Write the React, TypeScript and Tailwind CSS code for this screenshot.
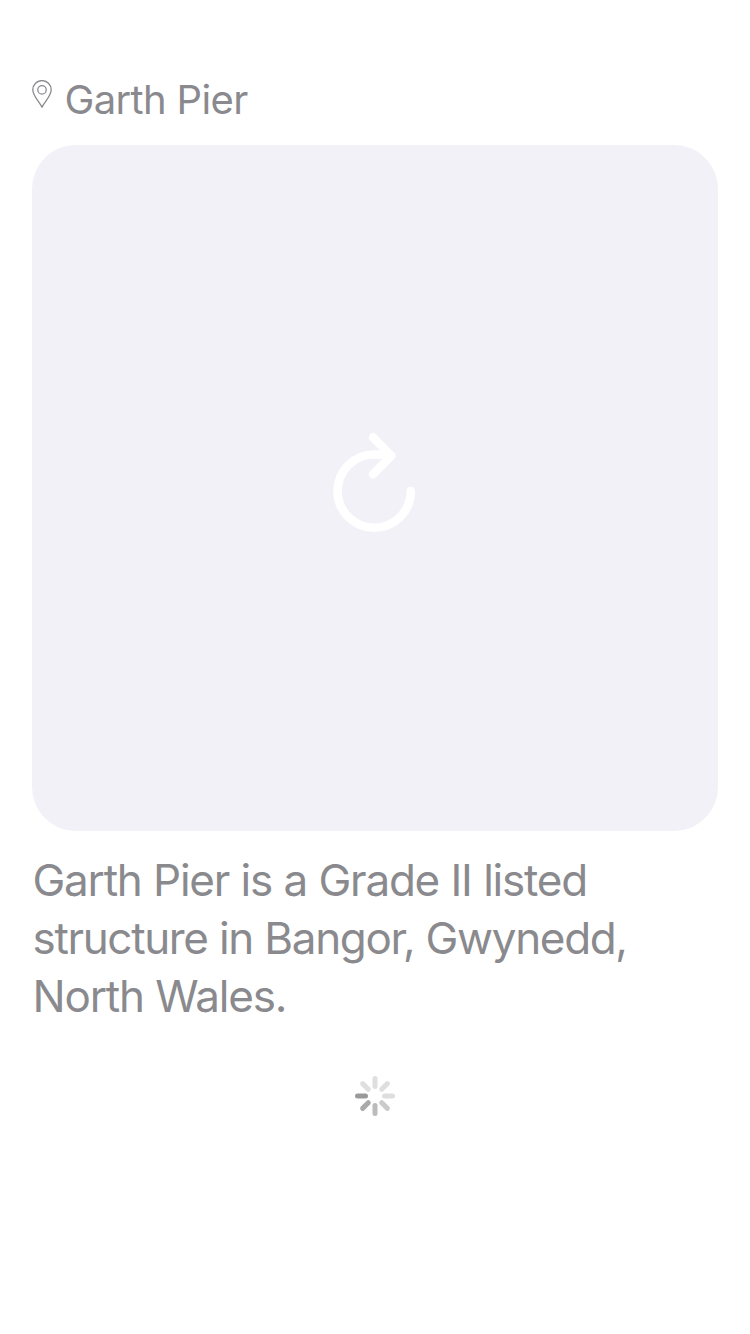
const FONT = "font-['Inter','Liberation_Sans',sans-serif]";

const SPOKES = [
  { angle: 0, color: "#dfdfdf" },
  { angle: 45, color: "#dfdfdf" },
  { angle: 90, color: "#dedede" },
  { angle: 135, color: "#cbcbcc" },
  { angle: 180, color: "#bbbbbc" },
  { angle: 225, color: "#aaaaab" },
  { angle: 270, color: "#9a9a9b" },
  { angle: 315, color: "#dfdfdf" },
];

function PinIcon() {
  return (
    <svg className="-mt-3 h-7 w-5" viewBox="0 0 20 28" fill="none" stroke="currentColor" strokeWidth="1.3" strokeLinejoin="round">
      <path d="M10 27.1C7.8 22.5.8 16 .8 9.8a9.2 9.2 0 0 1 18.4 0C19.2 16 12.2 22.5 10 27.1Z" />
      <circle cx="10" cy="9.9" r="4.2" />
    </svg>
  );
}

function ReloadIcon() {
  return (
    <svg className="mb-3 h-[100px] w-[84px]" viewBox="0 0 84 100" fill="none" stroke="white" strokeWidth="8.6" strokeLinecap="round" strokeLinejoin="round">
      <path d="M77.8 59A36.6 36.6 0 1 1 41.2 22.5Q50 22.5 57.6 23.8M40 5.3L58.3 23.8L40 42.3" />
    </svg>
  );
}

function Spinner() {
  return (
    <svg className="mt-[51px] size-10 self-center" viewBox="-20 -20 40 40" strokeWidth="5" strokeLinecap="round">
      {SPOKES.map(({ angle, color }) => (
        <path key={angle} d="M0-9.5V-17.5" stroke={color} transform={`rotate(${angle})`} />
      ))}
    </svg>
  );
}

export default function App() {
  return (
    <main className={`${FONT} flex h-[1334px] w-[750px] flex-col bg-white px-8 pt-[74px] text-[#8a8a8e]`}>
      <header className="flex h-[52px] items-center">
        <PinIcon />
        <h1 className="ml-[12.5px] text-[40px] leading-[52px] tracking-[-0.65px] whitespace-nowrap">Garth Pier</h1>
      </header>
      <section className="mt-[19px] flex h-[686px] items-center justify-center rounded-[44px] bg-[#f2f1f7]">
        <ReloadIcon />
      </section>
      <p className="mt-[20px] pl-[0.5px] text-[44px] leading-[58px] whitespace-nowrap">
        <span className="block tracking-[-1.22px] [word-spacing:0.3px]">Garth Pier is a Grade II listed</span>
        <span className="block tracking-[-1.34px] [word-spacing:0.3px]">structure in Bangor, Gwynedd,</span>
        <span className="block tracking-[-1.2px] [word-spacing:0.5px]">North Wales.</span>
      </p>
      <Spinner />
    </main>
  );
}
